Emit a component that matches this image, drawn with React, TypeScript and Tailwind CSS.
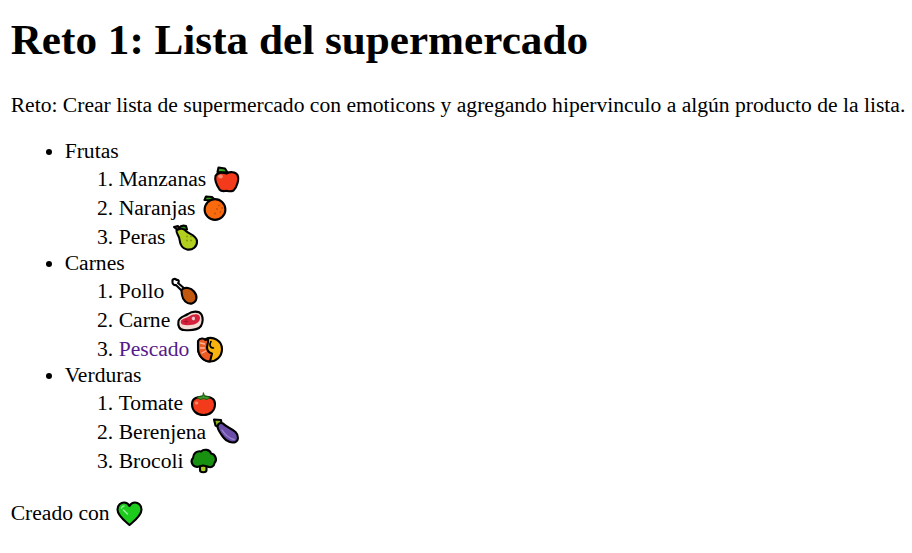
import React from "react";

type EmojiProps = { children: React.ReactNode; label: string };

const Emoji: React.FC<EmojiProps> = ({ children, label }) => (
  <svg
    viewBox="0 -1 29 29"
    role="img"
    aria-label={label}
    className="inline-block w-[29px] h-[29px] align-[-7px] overflow-visible"
    strokeLinejoin="round"
    strokeLinecap="round"
  >
    {children}
  </svg>
);

const ink = { stroke: "#000", strokeWidth: 2.1 };

const Apple = () => (
  <Emoji label="manzana">
    <path d="M5.5 7 L6.5 2.5 L13 3.5 L15.5 7.5 Z" fill="#3aa81c" {...ink} />
    <path d="M3.5 11 C5 7.5 10 7 14.5 8.5 C18 6.5 23.5 6.5 25.5 10 C27.5 14 25 22 21.5 25.5 C18.5 27 16 26 14.5 25.8 C11 26.5 9 26.5 7.5 24.5 C4.5 20 2.5 15 3.5 11 Z" fill="#f33b1b" {...ink} />
    <ellipse cx="8.5" cy="11.5" rx="2.4" ry="2" fill="#f78a73" />
  </Emoji>
);

const Orange = () => (
  <Emoji label="naranja">
    <path d="M3.5 6 L5 2.5 L11 3 L14.5 6.5 Z" fill="#3aa81c" {...ink} />
    <circle cx="14" cy="15.5" r="10.4" fill="#f96a0e" {...ink} />
    <g fill="#c9500a">
      <circle cx="18" cy="11.5" r="0.9" />
      <circle cx="21" cy="14" r="0.9" />
      <circle cx="16" cy="15" r="0.9" />
      <circle cx="19.5" cy="18" r="0.9" />
      <circle cx="14" cy="19.5" r="0.9" />
    </g>
  </Emoji>
);

const Pear = () => (
  <Emoji label="pera">
    <path d="M3 4 L7 3 L9 6 L6.5 7 Z" fill="#8a4b14" {...ink} />
    <path d="M8 5 C10 2 13 2.5 15 3 L16 6.5 L10 7 Z" fill="#2f9a17" {...ink} />
    <path d="M5.5 7.5 C9 4.5 13 5.5 15.5 8.5 C18 11 25 12 26 18 C26.5 23.5 21.5 27.5 16 26.5 C10.5 25.5 9 21 8.5 16.5 C8 12.5 5 10.5 5.5 7.5 Z" fill="#b2cf1f" {...ink} />
    <g fill="#7f9a10">
      <circle cx="16" cy="13.5" r="1" />
      <circle cx="20" cy="13.5" r="1" />
      <circle cx="16" cy="17.5" r="1" />
      <circle cx="20" cy="17.5" r="1" />
    </g>
  </Emoji>
);

const Chicken = () => (
  <Emoji label="pollo">
    <path d="M2.5 4.5 C2 2 5.5 1 6.5 3 C9 2.5 9.5 5 8 6 L15 12 L12.5 14.5 L6 8 C4 8.5 2 6.5 2.5 4.5 Z" fill="#fff" {...ink} />
    <path d="M12 12.5 C15 9.5 21 11 24 14.5 C28 19 27 25 22 26.5 C17 27.5 12.5 23 12 18 C11.8 16 11 14 12 12.5 Z" fill="#c2570f" {...ink} />
  </Emoji>
);

const Steak = () => (
  <Emoji label="carne">
    <path d="M2.5 15 C3.5 11 8 10.5 12 8 C16 5 23 4.5 25.5 8.5 C27.5 12.5 26.5 17 25 20 C22 24 14 24.5 8 24 C3.5 24 1.5 20 2.5 15 Z" fill="#f2dcd4" {...ink} />
    <path d="M5 14.5 C8 12 10 12.5 13 10.5 C17 8 22 7.5 23.5 10 C25 13.5 23 17 18 18.5 C13 19.5 9 19.5 6.5 18.5 C5 18 4.5 16 5 14.5 Z" fill="#d8203a" />
    <circle cx="17.5" cy="12.5" r="2.2" fill="#f7c9cf" stroke="#a5142a" strokeWidth="0.7" />
    <path d="M8 15.5 L12 15.5 M10 13.5 L10 17.5" stroke="#a5142a" strokeWidth="1" />
  </Emoji>
);

const Shrimp = () => (
  <Emoji label="pescado">
    <path d="M11 4 C18 0.5 27 6 27 14 C27 21.5 21 27 14 26.5 C8 26 3 20 3 13 Z" fill="#f9b30f" {...ink} />
    <path d="M3 6 C5 2.5 9 3 10.5 5 L13 3.5 C13.5 7 12.5 10 12 12 C12 15 13 17.5 17 18.5 L15 26.4 C8 26.5 3 20 3 13 Z" fill="#ed5a24" {...ink} />
    <path d="M5.5 8 L9.5 9 M5.5 13 L9.5 13 M7 18 L11 16" stroke="#fbb59b" strokeWidth="1.3" />
    <path d="M16 6.5 C14 9.5 15 13 18.5 13" stroke="#000" strokeWidth="1.6" fill="none" />
  </Emoji>
);

const Tomato = () => (
  <Emoji label="tomate">
    <path d="M3 15 C3 9 9 7.5 14.5 7.5 C20 7.5 26 9 26 15 C26 22 21 26 14.5 26 C8 26 3 22 3 15 Z" fill="#f33b1b" {...ink} />
    <path d="M14.5 4 L15.5 7 L21 8 L18 10.5 L14.5 9.5 L11 10.5 L8 8 L13.5 7 Z" fill="#3f9a2b" stroke="#1b5c10" strokeWidth="1" />
    <ellipse cx="7.5" cy="14" rx="1.8" ry="1.5" fill="#f78a73" />
  </Emoji>
);

const Eggplant = () => (
  <Emoji label="berenjena">
    <path d="M2 1.5 L9 2 L9.5 5.5 L5.5 8.5 L3.5 7.5 Z" fill="#8cb51d" {...ink} />
    <path d="M5.5 8.5 C6 5 9 4.5 11 5.5 C14 9 19 10 23.5 14 C27 17.5 26.5 22.5 23.5 24 C20 25.5 14.5 23.5 11.5 19.5 C9 16 6 13 5.5 8.5 Z" fill="#6a4da8" {...ink} />
    <path d="M10 12 C13 17 17 20 22 21.5" stroke="#9a86cf" strokeWidth="1.4" fill="none" />
  </Emoji>
);

const Broccoli = () => (
  <Emoji label="brocoli">
    <path d="M11 17 L11 23 C11 26 17.5 26 17.5 23 L17.5 17 Z" fill="#a8cc1c" {...ink} />
    <path d="M8 20 C3 19.5 1 14 4 11 C4 6.5 8 3.5 12 4.5 C15 1.5 21 2.5 22 6.5 C26.5 7 28.5 13 25.5 16 C25 20 21.5 21 18.5 19.5 L14 18.5 L10 19.5 Z" fill="#17910f" {...ink} />
  </Emoji>
);

const Heart = () => (
  <Emoji label="corazon">
    <path d="M14.5 26 C10 22 2.5 17 2.5 10.5 C2.5 6 6 3.5 9 3.5 C11.5 3.5 13.5 5 14.5 7 C15.5 5 17.5 3.5 20 3.5 C23 3.5 26.5 6 26.5 10.5 C26.5 17 19 22 14.5 26 Z" fill="#1dcb1d" {...ink} />
    <path d="M6.5 9 C7 7.5 8 7 9 7 M8.5 11 L12.5 15" stroke="#9bee9b" strokeWidth="1.5" fill="none" />
  </Emoji>
);

const groups = [
  {
    name: "Frutas",
    items: [
      { label: "Manzanas", icon: <Apple /> },
      { label: "Naranjas", icon: <Orange /> },
      { label: "Peras", icon: <Pear /> },
    ],
  },
  {
    name: "Carnes",
    items: [
      { label: "Pollo", icon: <Chicken /> },
      { label: "Carne", icon: <Steak /> },
      { label: "Pescado", icon: <Shrimp />, link: true },
    ],
  },
  {
    name: "Verduras",
    items: [
      { label: "Tomate", icon: <Tomato /> },
      { label: "Berenjena", icon: <Eggplant /> },
      { label: "Brocoli", icon: <Broccoli /> },
    ],
  },
];

export default function App() {
  return (
    <div className="px-[10.67px] pt-[15px] font-['Liberation_Serif',serif] text-[21.6px] leading-[normal] text-black bg-white">
      <h1 className="text-[43.2px] font-bold leading-[normal] mb-[28.6px] whitespace-nowrap">
        Reto 1: Lista del supermercado
      </h1>
      <p className="whitespace-nowrap">
        Reto: Crear lista de supermercado con emoticons y agregando hipervinculo a algún producto de la lista.
      </p>
      <ul className="list-disc pl-[54px] mt-[21.33px] mb-[22.8px]">
        {groups.map((group) => (
          <li key={group.name}>
            {group.name}
            <ol className="list-decimal pl-[54px]">
              {group.items.map((item) => (
                <li key={item.label}>
                  {item.link ? (
                    <a href="#" className="text-[#551a8b]">
                      {item.label}
                    </a>
                  ) : (
                    item.label
                  )}{" "}
                  {item.icon}
                </li>
              ))}
            </ol>
          </li>
        ))}
      </ul>
      <p>
        Creado con <Heart />
      </p>
    </div>
  );
}
